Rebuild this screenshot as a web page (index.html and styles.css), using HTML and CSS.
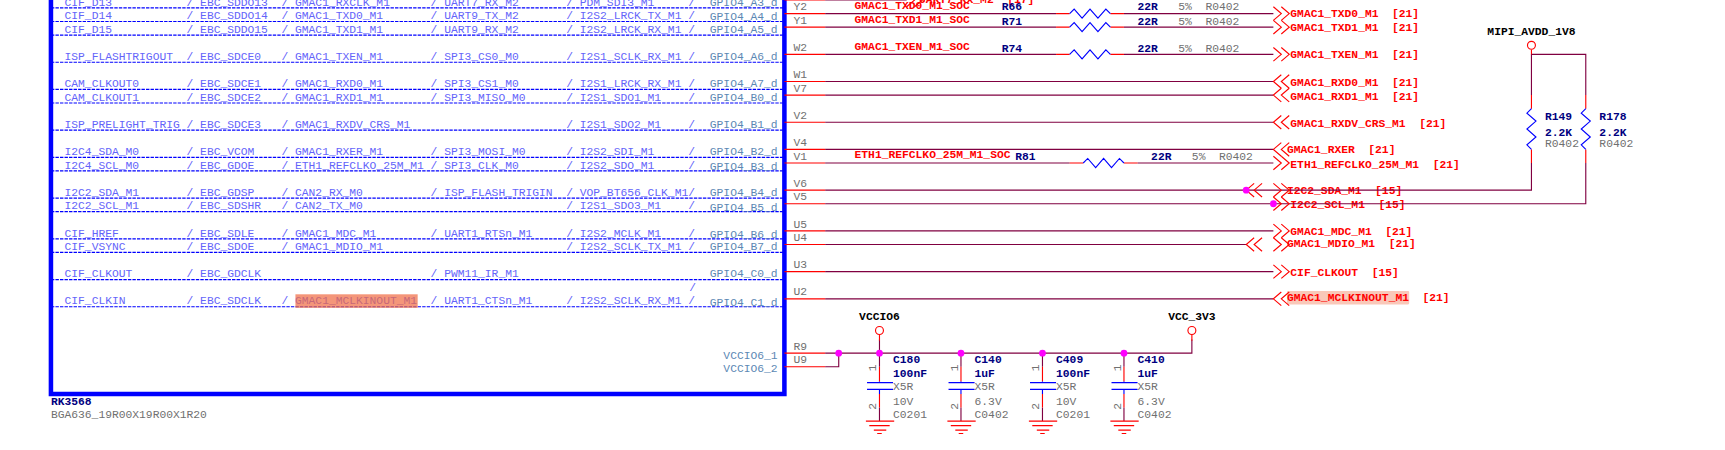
FILE: index.html
```html
<!DOCTYPE html>
<html lang="en">
<head>
<meta charset="utf-8">
<title>RK3568 schematic – VCCIO6 bank</title>
<link rel="stylesheet" href="styles.css">
</head>
<body>
<main class="sheet">
<!-- Schematic grid: 12 units per pin pitch, chip outline starts at x = 0 -->
<svg class="schematic" viewBox="-45 -12 1524 397" role="img" aria-label="RK3568 VCCIO6 schematic">
  <defs>
    <path id="out" class="pin" d="M0-6l7 6-7 6M7-6l7 6-7 6"/>
    <path id="in" class="pin" d="M7-6l-7 6 7 6M14-6l-7 6 7 6"/>
    <g id="res">
      <path class="pin" d="M0 0h12M48 0h12"/>
      <path class="part" d="M12 0l4-4 7 8 7-8 7 8 7-8 4 4"/>
    </g>
    <g id="resv">
      <path class="pin" d="M0 0v12M0 48v12"/>
      <path class="part" d="M0 12l-4 4 8 7-8 7 8 7-8 7 4 4"/>
    </g>
    <g id="power">
      <circle class="pin" cx="0" cy="-20" r="3.5"/>
      <path class="pin" d="M0-16v5"/>
    </g>
    <g id="cap">
      <path class="wire" d="M0 0v12M0 48v12"/>
      <path class="pin" d="M0 12v13M0 36v12"/>
      <path class="part" d="M0 25v1M-11 26h23M-11 32h23M0 32v4"/>
      <path class="pin" d="M-12 60h25M-9 64h18M-5 68h11M-2 71h4"/>
    </g>
  </defs>

  <g class="rows">
    <path d="M0-5h648M0 7h648M0 19h648M0 43h648M0 67h648M0 79h648M0 103h648M0 127h648M0 139h648M0 163h648M0 175h648M0 199h648M0 211h648M0 235h648M0 259h648"/>
  </g>

  <g class="func">
    <text x="12" y="-7">CIF_D13           / EBC_SDDO13  / GMAC1_RXCLK_M1      / UART7_RX_M2       / PDM_SDI3_M1     /</text>
    <text x="12" y="5">CIF_D14           / EBC_SDDO14  / GMAC1_TXD0_M1       / UART9_TX_M2       / I2S2_LRCK_TX_M1 /</text>
    <text x="12" y="17">CIF_D15           / EBC_SDDO15  / GMAC1_TXD1_M1       / UART9_RX_M2       / I2S2_LRCK_RX_M1 /</text>
    <text x="12" y="41">ISP_FLASHTRIGOUT  / EBC_SDCE0   / GMAC1_TXEN_M1       / SPI3_CS0_M0       / I2S1_SCLK_RX_M1 /</text>
    <text x="12" y="65">CAM_CLKOUT0       / EBC_SDCE1   / GMAC1_RXD0_M1       / SPI3_CS1_M0       / I2S1_LRCK_RX_M1 /</text>
    <text x="12" y="77">CAM_CLKOUT1       / EBC_SDCE2   / GMAC1_RXD1_M1       / SPI3_MISO_M0      / I2S1_SDO1_M1    /</text>
    <text x="12" y="101">ISP_PRELIGHT_TRIG / EBC_SDCE3   / GMAC1_RXDV_CRS_M1                       / I2S1_SDO2_M1    /</text>
    <text x="12" y="125">I2C4_SDA_M0       / EBC_VCOM    / GMAC1_RXER_M1       / SPI3_MOSI_M0      / I2S2_SDI_M1     /</text>
    <text x="12" y="137">I2C4_SCL_M0       / EBC_GDOE    / ETH1_REFCLKO_25M_M1 / SPI3_CLK_M0       / I2S2_SDO_M1     /</text>
    <text x="12" y="161">I2C2_SDA_M1       / EBC_GDSP    / CAN2_RX_M0          / ISP_FLASH_TRIGIN  / VOP_BT656_CLK_M1/</text>
    <text x="12" y="173">I2C2_SCL_M1       / EBC_SDSHR   / CAN2_TX_M0                              / I2S1_SDO3_M1    /</text>
    <text x="12" y="197">CIF_HREF          / EBC_SDLE    / GMAC1_MDC_M1        / UART1_RTSn_M1     / I2S2_MCLK_M1    /</text>
    <text x="12" y="209">CIF_VSYNC         / EBC_SDOE    / GMAC1_MDIO_M1                           / I2S2_SCLK_TX_M1 /</text>
    <text x="12" y="233">CIF_CLKOUT        / EBC_GDCLK                         / PWM11_IR_M1</text>
    <text x="564" y="245">/</text>
    <text x="12" y="257">CIF_CLKIN         / EBC_SDCLK   / GMAC1_MCLKINOUT_M1  / UART1_CTSn_M1     / I2S2_SCLK_RX_M1 /</text>
  </g>
  <rect class="match-active" x="216" y="248" width="108" height="12"/>

  <g class="gpio">
    <text x="642" y="-7">GPIO4_A3_d</text>
    <text x="642" y="6">GPIO4_A4_d</text>
    <text x="642" y="17">GPIO4_A5_d</text>
    <text x="642" y="41">GPIO4_A6_d</text>
    <text x="642" y="65">GPIO4_A7_d</text>
    <text x="642" y="77">GPIO4_B0_d</text>
    <text x="642" y="101">GPIO4_B1_d</text>
    <text x="642" y="125">GPIO4_B2_d</text>
    <text x="642" y="138">GPIO4_B3_d</text>
    <text x="642" y="161">GPIO4_B4_d</text>
    <text x="642" y="174">GPIO4_B5_d</text>
    <text x="642" y="198">GPIO4_B6_d</text>
    <text x="642" y="209">GPIO4_B7_d</text>
    <text x="642" y="233">GPIO4_C0_d</text>
    <text x="642" y="258">GPIO4_C1_d</text>
    <text x="642" y="305">VCCIO6_1</text>
    <text x="642" y="317">VCCIO6_2</text>
  </g>

  <path class="chip" d="M0-24V336H648V-24"/>
  <text class="ref" x="0" y="346">RK3568</text>
  <text class="info" x="0" y="357">BGA636_19R00X19R00X1R20</text>

  <g class="info">
    <text x="656" y="-3">Y2</text>
    <text x="656" y="9">Y1</text>
    <text x="656" y="33">W2</text>
    <text x="656" y="57">W1</text>
    <text x="656" y="69">V7</text>
    <text x="656" y="93">V2</text>
    <text x="656" y="117">V4</text>
    <text x="656" y="129">V1</text>
    <text x="656" y="153">V6</text>
    <text x="656" y="165">V5</text>
    <text x="656" y="189">U5</text>
    <text x="656" y="201">U4</text>
    <text x="656" y="225">U3</text>
    <text x="656" y="249">U2</text>
    <text x="656" y="297">R9</text>
    <text x="656" y="309">U9</text>
  </g>

  <g class="net">
    <rect class="match" x="1092" y="245" width="108" height="12" rx="1"/>
    <text x="767" y="-9">UART7_RX_M2  [17]</text>
    <text x="710" y="-4">GMAC1_TXD0_M1_SOC</text>
    <text x="710" y="8">GMAC1_TXD1_M1_SOC</text>
    <text x="710" y="32">GMAC1_TXEN_M1_SOC</text>
    <text x="710" y="128">ETH1_REFCLKO_25M_M1_SOC</text>
    <text x="1095" y="3">GMAC1_TXD0_M1  [21]</text>
    <text x="1095" y="15">GMAC1_TXD1_M1  [21]</text>
    <text x="1095" y="39">GMAC1_TXEN_M1  [21]</text>
    <text x="1095" y="64">GMAC1_RXD0_M1  [21]</text>
    <text x="1095" y="76">GMAC1_RXD1_M1  [21]</text>
    <text x="1095" y="100">GMAC1_RXDV_CRS_M1  [21]</text>
    <text x="1092" y="123">GMAC1_RXER  [21]</text>
    <text x="1095" y="136">ETH1_REFCLKO_25M_M1  [21]</text>
    <text x="1092" y="159">I2C2_SDA_M1  [15]</text>
    <text x="1095" y="172">I2C2_SCL_M1  [15]</text>
    <text x="1095" y="196">GMAC1_MDC_M1  [21]</text>
    <text x="1092" y="206">GMAC1_MDIO_M1  [21]</text>
    <text x="1095" y="232">CIF_CLKOUT  [15]</text>
    <text x="1092" y="254">GMAC1_MCLKINOUT_M1  [21]</text>
  </g>

  <path class="wire" d="M684-12h72M684 0h204M948 0h132M684 12h204M948 12h132M684 36h204M948 36h132M684 60h396M684 72h396M684 96h396M684 120h396M684 132h216M960 132h120M684 156h624v-24M684 168h672v-36M684 192h396M684 204h372M684 228h396M684 252h396"/>
  <path class="wire" d="M1308 72v-36h48v36M684 300h324v-12M684 312h12v-12M732 300v-12"/>
  <path class="pin" d="M648-12h36M648 0h36M648 12h36M648 36h36M648 60h36M648 72h36M648 96h36M648 120h36M648 132h36M648 156h36M648 168h36M648 192h36M648 204h36M648 228h36M648 252h36M648 300h36M648 312h36"/>

  <use href="#res" x="888" y="0"/>
  <use href="#res" x="888" y="12"/>
  <use href="#res" x="888" y="36"/>
  <use href="#res" x="900" y="132"/>
  <g class="ref">
    <text x="840" y="-3">R66</text><text x="960" y="-3">22R</text>
    <text x="840" y="10">R71</text><text x="960" y="10">22R</text>
    <text x="840" y="34">R74</text><text x="960" y="34">22R</text>
    <text x="852" y="129">R81</text><text x="972" y="129">22R</text>
  </g>
  <g class="info">
    <text x="996" y="-3">5%  R0402</text>
    <text x="996" y="10">5%  R0402</text>
    <text x="996" y="34">5%  R0402</text>
    <text x="1008" y="129">5%  R0402</text>
  </g>

  <use href="#out" x="756" y="-12"/>
  <use href="#out" x="1080" y="0"/>
  <use href="#out" x="1080" y="12"/>
  <use href="#out" x="1080" y="36"/>
  <use href="#in" x="1080" y="60"/>
  <use href="#in" x="1080" y="72"/>
  <use href="#in" x="1080" y="96"/>
  <use href="#in" x="1080" y="120"/>
  <use href="#out" x="1080" y="132"/>
  <use href="#in" x="1056" y="156"/>
  <use href="#out" x="1080" y="156"/>
  <use href="#out" x="1080" y="168"/>
  <use href="#out" x="1080" y="192"/>
  <use href="#in" x="1056" y="204"/>
  <use href="#out" x="1080" y="204"/>
  <use href="#out" x="1080" y="228"/>
  <use href="#in" x="1080" y="252"/>

  <text class="rail" x="1308" y="19">MIPI_AVDD_1V8</text>
  <circle class="pin" cx="1308" cy="28" r="3.5"/>
  <path class="pin" d="M1308 32v4"/>
  <use href="#resv" x="1308" y="72"/>
  <use href="#resv" x="1356" y="72"/>
  <g class="ref">
    <text x="1320" y="94">R149</text><text x="1320" y="108">2.2K</text>
    <text x="1368" y="94">R178</text><text x="1368" y="108">2.2K</text>
  </g>
  <g class="info">
    <text x="1320" y="118">R0402</text>
    <text x="1368" y="118">R0402</text>
  </g>

  <text class="rail" x="732" y="271">VCCIO6</text>
  <text class="rail" x="1008" y="271">VCC_3V3</text>
  <use href="#power" x="732" y="300"/>
  <use href="#power" x="1008" y="300"/>
  <use href="#cap" x="732" y="300"/>
  <use href="#cap" x="804" y="300"/>
  <use href="#cap" x="876" y="300"/>
  <use href="#cap" x="948" y="300"/>
  <g class="ref">
    <text x="744" y="309">C180</text><text x="744" y="321">100nF</text>
    <text x="816" y="309">C140</text><text x="816" y="321">1uF</text>
    <text x="888" y="309">C409</text><text x="888" y="321">100nF</text>
    <text x="960" y="309">C410</text><text x="960" y="321">1uF</text>
  </g>
  <g class="info">
    <text x="744" y="333">X5R</text><text x="744" y="346">10V</text><text x="744" y="357">C0201</text>
    <text x="816" y="333">X5R</text><text x="816" y="346">6.3V</text><text x="816" y="357">C0402</text>
    <text x="888" y="333">X5R</text><text x="888" y="346">10V</text><text x="888" y="357">C0201</text>
    <text x="960" y="333">X5R</text><text x="960" y="346">6.3V</text><text x="960" y="357">C0402</text>
    <text transform="translate(729 316) rotate(-90)">1</text><text transform="translate(729 350) rotate(-90)">2</text>
    <text transform="translate(801 316) rotate(-90)">1</text><text transform="translate(801 350) rotate(-90)">2</text>
    <text transform="translate(873 316) rotate(-90)">1</text><text transform="translate(873 350) rotate(-90)">2</text>
    <text transform="translate(945 316) rotate(-90)">1</text><text transform="translate(945 350) rotate(-90)">2</text>
  </g>

  <g class="junction">
    <circle cx="696" cy="300" r="3"/>
    <circle cx="732" cy="300" r="3"/>
    <circle cx="804" cy="300" r="3"/>
    <circle cx="876" cy="300" r="3"/>
    <circle cx="948" cy="300" r="3"/>
    <circle cx="1056" cy="156" r="3"/>
    <circle cx="1080" cy="168" r="3"/>
  </g>
</svg>
</main>
</body>
</html>
```
FILE: styles.css
```css
body {
  margin: 0;
  background: #fff;
}

.sheet {
  overflow: hidden;
}

.schematic {
  display: block;
  width: 100%;
  height: auto;
  font-family: "Liberation Mono", monospace;
  font-size: 10px;
}

.schematic text {
  white-space: pre;
}

.wire,
.pin,
.part,
.rows,
.chip {
  fill: none;
  stroke-width: 1px;
}

.wire {
  stroke: #800040;
}

.pin {
  stroke: #f00;
}

.part {
  stroke: #00f;
}

.rows {
  stroke: #00f;
  stroke-dasharray: 3 1;
}

.chip {
  stroke: #00f;
  stroke-width: 4px;
}

.func {
  fill: #6464fa;
}

.gpio {
  fill: #5c88b4;
  text-anchor: end;
}

.info {
  fill: #707070;
}

.ref {
  fill: #000080;
  font-weight: bold;
}

.net {
  fill: #f00;
  font-weight: bold;
}

.rail {
  fill: #000;
  font-weight: bold;
  text-anchor: middle;
}

.junction {
  fill: #f0f;
}

.match {
  fill: #f9c8b9;
}

.match-active {
  fill: #ef6941;
  opacity: 0.7;
}
```
